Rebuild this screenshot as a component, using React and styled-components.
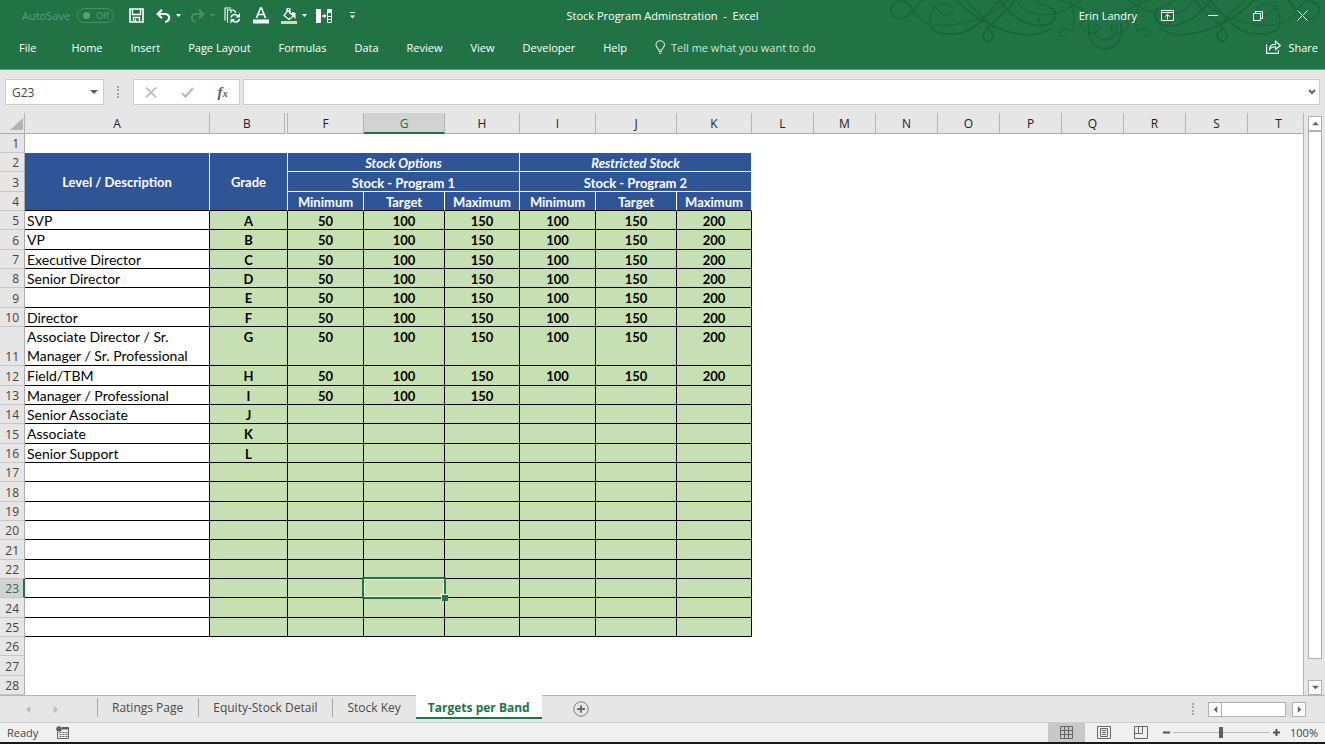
import { useState } from "react";
import styled, { createGlobalStyle } from "styled-components";

const columns = [
  { name: "A", width: 185 },
  { name: "B", width: 78 },
  { name: "F", width: 76 },
  { name: "G", width: 81 },
  { name: "H", width: 75 },
  { name: "I", width: 76 },
  { name: "J", width: 81 },
  { name: "K", width: 75 },
  { name: "L", width: 62 },
  { name: "M", width: 62 },
  { name: "N", width: 62 },
  { name: "O", width: 62 },
  { name: "P", width: 62 },
  { name: "Q", width: 62 },
  { name: "R", width: 62 },
  { name: "S", width: 62 },
  { name: "T", width: 62 },
];

const valueColumns = ["F", "G", "H", "I", "J", "K"];
const emptyColumns = ["L", "M", "N", "O", "P", "Q", "R", "S", "T", "rest"];

const program1 = [50, 100, 150];
const program2 = [100, 150, 200];

const levels = [
  { label: "SVP", grade: "A", values: [...program1, ...program2] },
  { label: "VP", grade: "B", values: [...program1, ...program2] },
  { label: "Executive Director", grade: "C", values: [...program1, ...program2] },
  { label: "Senior Director", grade: "D", values: [...program1, ...program2] },
  { label: "", grade: "E", values: [...program1, ...program2] },
  { label: "Director", grade: "F", values: [...program1, ...program2] },
  {
    label: "Associate Director / Sr. Manager / Sr. Professional",
    grade: "G",
    values: [...program1, ...program2],
  },
  { label: "Field/TBM", grade: "H", values: [...program1, ...program2] },
  { label: "Manager / Professional", grade: "I", values: program1 },
  { label: "Senior Associate", grade: "J", values: [] },
  { label: "Associate", grade: "K", values: [] },
  { label: "Senior Support", grade: "L", values: [] },
  ...Array.from({ length: 9 }, () => ({ label: "", grade: "", values: [] })),
];

const ribbonTabs = [
  "File",
  "Home",
  "Insert",
  "Page Layout",
  "Formulas",
  "Data",
  "Review",
  "View",
  "Developer",
  "Help",
];

const sheets = ["Ratings Page", "Equity-Stock Detail", "Stock Key", "Targets per Band"];

const Caret = () => (
  <svg width="5" height="3" viewBox="0 0 5 3">
    <path d="M0 0h5L2.5 3z" fill="currentColor" />
  </svg>
);

const Triangle = ({ points, size = 8 }) => (
  <svg width={size} height={size} viewBox="0 0 8 8">
    <polygon points={points} fill="currentColor" />
  </svg>
);

const Swirls = () => {
  const half = (
    <>
      <g strokeWidth="6">
        <path d="M112 0C96 14 78 52 48 56C18 58 8 24 28 10C48-2 68 4 80 24" />
        <path d="M138 78C150 112 232 112 276 74C300 50 328 24 344 0" />
        <path d="M390 0C366 40 318 66 300 92C284 118 304 130 318 120C330 108 322 92 306 88" />
        <path d="M212 0C262 50 348 104 432 104C468 104 480 94 500 82" />
        <path d="M344 0C372 44 420 78 470 78C512 76 524 34 492 22" />
        <path d="M612 70C606 120 628 146 660 146" />
      </g>
      <g strokeWidth="4">
        <path d="M80 24C96 56 128 76 172 76C252 74 322 44 372 0" />
        <path d="M136 78C130 30 152 10 184 12C212 20 206 46 180 44C164 42 158 26 140 14" />
        <path d="M240 0C276 30 300 60 326 84" />
        <path d="M396 0C408 32 446 46 486 44C526 40 560 22 590 0" />
        <path d="M484 74C462 80 454 60 468 52" />
        <path d="M450 0C462 12 480 14 498 24C522 40 512 66 484 76" />
        <path d="M555 0C566 30 574 72 562 94C550 82 526 84 524 100C526 112 542 110 540 100" />
        <path d="M520 0C560 6 610 44 660 60" />
        <path d="M600 62C580 66 590 92 614 98C640 106 654 78 632 76C616 80 628 118 660 120" />
      </g>
    </>
  );
  return (
    <SwirlSvg width="440" height="54" viewBox="0 0 1320 162" fill="none" stroke="#1b663d">
      {half}
      <g transform="translate(1320 0) scale(-1 1)">{half}</g>
    </SwirlSvg>
  );
};

const Level = ({ level, row, selected, onSelect }) => (
  <tr>
    <RowHeader scope="row" $active={selected.row === row}>
      {row}
    </RowHeader>
    <Cell $wrap={level.label.length > 30}>{level.label}</Cell>
    <Cell $tone="green">{level.grade}</Cell>
    {valueColumns.map((column, i) => (
      <Cell
        key={column}
        $tone="green"
        $selected={selected.row === row && selected.column === column}
        onClick={() => onSelect({ row, column })}
      >
        {level.values[i]}
      </Cell>
    ))}
    <Blanks />
  </tr>
);

const Blanks = () => emptyColumns.map((column) => <td key={column} />);

const EmptyRow = ({ row }) => (
  <tr>
    <RowHeader scope="row">{row}</RowHeader>
    <td colSpan={18} />
  </tr>
);

export default function App() {
  const [selected, setSelected] = useState({ row: 23, column: "G" });
  const [sheet, setSheet] = useState("Targets per Band");
  const [zoom, setZoom] = useState(100);

  return (
    <Window>
      <GlobalStyle />
      <Header>
        <Swirls />
        <TitleBar>
          <QuickAccess>
            <AutoSave>
              AutoSave
              <Toggle>
                <input type="checkbox" role="switch" aria-label="AutoSave" disabled />
                Off
              </Toggle>
            </AutoSave>
            <ToolButton aria-label="Save" $space={3}>
              <svg width="15" height="15" viewBox="0 0 15 15" fill="none" stroke="currentColor">
                <path d="M1 1h13v13H1z" strokeWidth="1.6" />
                <path d="M3.5 1v5.500h8V1M4.500 14V9.500h6V14" strokeWidth="1.4" />
                <path d="M6.500 11v3" strokeWidth="1.4" />
              </svg>
            </ToolButton>
            <ToolButton aria-label="Undo">
              <svg width="15" height="14" viewBox="0 0 15 14" fill="none" stroke="currentColor">
                <path d="M1.500 5H9c6 0 5 7.500 0 7.800" strokeWidth="2.200" />
                <path d="M6 0.800L1.700 5L6 9.200" strokeWidth="2.200" />
              </svg>
              <Caret />
            </ToolButton>
            <ToolButton aria-label="Redo" disabled>
              <svg width="15" height="14" viewBox="0 0 15 14" fill="none" stroke="currentColor">
                <path d="M13.500 5H6c-6 0-5 7.500 0 7.800" strokeWidth="2" />
                <path d="M9 0.800L13.300 5L9 9.200" strokeWidth="2" />
              </svg>
              <Caret />
            </ToolButton>
            <ToolButton aria-label="Refresh all" $space={3}>
              <svg width="17" height="17" viewBox="0 0 17 17" fill="none" stroke="currentColor">
                <path d="M1 13.500V1h6M3.500 15.500V3h6l2.500 2.500M7 3v3" strokeWidth="1.100" />
                <path d="M7 10.500c1-3.500 5-3.800 7-1.500M15.500 12c-1 3.500-5 3.800-7 1.500" strokeWidth="1.600" />
                <path d="M16 6v4.500h-4.500zM6.500 16.500V12H11z" fill="currentColor" stroke="none" />
              </svg>
            </ToolButton>
            <ToolButton aria-label="Font colour" $space={3}>
              <svg width="16" height="17" viewBox="0 0 16 17" fill="none" stroke="currentColor">
                <path d="M3.500 11L7.500 1h1l4 10M5 7.500h6" strokeWidth="1.700" />
                <path d="M0 14.500h16" strokeWidth="4" />
              </svg>
            </ToolButton>
            <ToolButton aria-label="Fill colour">
              <svg width="16" height="16" viewBox="0 0 16 16" fill="none" stroke="currentColor">
                <path d="M7 2.500L12.500 8L8 11.500L3 7.500zM6 5V1.500C6-0.500 9-0.500 9 1.500V6" strokeWidth="1.300" />
                <path d="M11 4l3.500 1v6c-2-1-1-4-3.500-5z" fill="currentColor" stroke="none" />
                <path d="M0 14.500h16" stroke="#c6e0b4" strokeWidth="3" />
              </svg>
              <Caret />
            </ToolButton>
            <ToolButton aria-label="Text to columns" $space={8}>
              <svg width="17" height="14" viewBox="0 0 17 14" fill="currentColor">
                <path d="M0 0h5v14H0zM6 6.300h2V4.500L10.500 7L8 9.500V7.700H6zM11 0h5v4h-5z" />
                <path d="M11.500 4v9.500h4V4M11.500 7.500h4M11.500 10.500h4" fill="none" stroke="currentColor" />
              </svg>
            </ToolButton>
            <ToolButton aria-label="Customize toolbar">
              <svg width="5" height="7" viewBox="0 0 5 7" fill="currentColor">
                <path d="M0 0h5v1H0zM0 3.500h5L2.500 6.500z" />
              </svg>
            </ToolButton>
          </QuickAccess>
          <Title>Stock Program Adminstration&nbsp; -&nbsp; Excel</Title>
          <WindowControls>
            <span>Erin Landry</span>
            <ToolButton aria-label="Ribbon display options">
              <svg width="13" height="11" viewBox="0 0 13 11" fill="none" stroke="currentColor">
                <path d="M.5.500h12v10H.5zM.5 2.500h12M6.500 9.500v-5M4 6.700L6.500 4.300L9 6.700" />
              </svg>
            </ToolButton>
            <ToolButton aria-label="Minimize">
              <svg width="11" height="11" viewBox="0 0 11 11" stroke="currentColor">
                <path d="M0 5.500h10" />
              </svg>
            </ToolButton>
            <ToolButton aria-label="Restore">
              <svg width="10" height="10" viewBox="0 0 10 10" fill="none" stroke="currentColor">
                <path d="M.5 2.500h7v7h-7zM2.500 2.500v-2h7v7h-2" />
              </svg>
            </ToolButton>
            <ToolButton aria-label="Close">
              <svg width="11" height="11" viewBox="0 0 11 11" stroke="currentColor">
                <path d="M.5.500l10 10M10.500.500l-10 10" />
              </svg>
            </ToolButton>
          </WindowControls>
        </TitleBar>
        <Ribbon>
          {ribbonTabs.map((tab) => (
            <RibbonTab key={tab}>{tab}</RibbonTab>
          ))}
          <TellMe>
            <svg width="11" height="14" viewBox="0 0 11 14" fill="none" stroke="currentColor" strokeWidth="1.100">
              <path d="M3.500 10C3.500 8 1 7.500 1 4.800C1 2.500 2.900 0.800 5.200 0.800S9.500 2.500 9.500 4.800C9.500 7.500 7 8 7 10zM3.700 11.500h3.200M4 13.200h2.500" />
            </svg>
            Tell me what you want to do
          </TellMe>
          <Share>
            <svg width="15" height="14" viewBox="0 0 15 14" fill="none" stroke="currentColor" strokeWidth="1.100">
              <path d="M.6 4.500v8.900h11.800V10" />
              <path d="M3.500 9.500C3.500 6 6 4.200 9.500 4.200V1.200L14.300 5.500L9.500 9.500V6.800C6.500 6.800 4.800 7.500 3.500 9.500z" />
            </svg>
            Share
          </Share>
        </Ribbon>
      </Header>

      <FormulaBar>
        <NameBox>
          <input
            aria-label="Name box"
            value={selected.column + selected.row}
            readOnly
          />
          <button aria-label="Open name list">
            <Triangle points="0,2 8,2 4,6" />
          </button>
        </NameBox>
        <Dots />
        <FormulaActions>
          <button aria-label="Cancel">
            <svg width="12" height="11" viewBox="0 0 12 11" stroke="#bdbdbd" strokeWidth="1.800">
              <path d="M1 .5l10 10M11 .5L1 10.500" />
            </svg>
          </button>
          <button aria-label="Enter">
            <svg width="13" height="11" viewBox="0 0 13 11" fill="none" stroke="#bdbdbd" strokeWidth="2.400">
              <path d="M1 6l3.500 3.500L12 1" />
            </svg>
          </button>
          <FxButton aria-label="Insert function">
            f<small>x</small>
          </FxButton>
        </FormulaActions>
        <FormulaInput>
          <input aria-label="Formula" />
          <button aria-label="Expand formula bar">
            <svg width="8" height="6" viewBox="0 0 8 6" fill="none" stroke="#5f5f5f" strokeWidth="2">
              <path d="M1 1l3 3l3-3" />
            </svg>
          </button>
        </FormulaInput>
      </FormulaBar>

      <Workspace>
        <SheetArea>
          <Sheet>
            <colgroup>
              <Col $width={25} />
              {columns.map((column) => (
                <Col key={column.name} $width={column.width} />
              ))}
              <col />
            </colgroup>
            <thead>
              <tr>
                <Corner>
                  <svg width="14" height="12" viewBox="0 0 14 12">
                    <path d="M14 0v12H1z" fill="#b4b4b4" />
                  </svg>
                </Corner>
                {columns.map((column) => (
                  <ColumnHeader
                    key={column.name}
                    scope="col"
                    $active={column.name === selected.column}
                    $hiddenAfter={column.name === "B"}
                  >
                    {column.name}
                  </ColumnHeader>
                ))}
                <ColumnHeader />
              </tr>
            </thead>
            <tbody>
              <EmptyRow row={1} />
              <tr>
                <RowHeader scope="row">2</RowHeader>
                <Cell $tone="blue" $last rowSpan={3}>
                  Level / Description
                </Cell>
                <Cell $tone="blue" $last rowSpan={3}>
                  Grade
                </Cell>
                <Cell $tone="blue" colSpan={3}>
                  <em>Stock Options</em>
                </Cell>
                <Cell $tone="blue" colSpan={3}>
                  <em>Restricted Stock</em>
                </Cell>
                <Blanks />
              </tr>
              <tr>
                <RowHeader scope="row">3</RowHeader>
                <Cell $tone="blue" colSpan={3}>
                  Stock - Program 1
                </Cell>
                <Cell $tone="blue" colSpan={3}>
                  Stock - Program 2
                </Cell>
                <Blanks />
              </tr>
              <tr>
                <RowHeader scope="row">4</RowHeader>
                {["Minimum", "Target", "Maximum", "Minimum", "Target", "Maximum"].map(
                  (title, i) => (
                    <Cell key={i} $tone="blue" $last>
                      {title}
                    </Cell>
                  )
                )}
                <Blanks />
              </tr>
              {levels.map((level, i) => (
                <Level
                  key={i}
                  level={level}
                  row={i + 5}
                  selected={selected}
                  onSelect={setSelected}
                />
              ))}
              <EmptyRow row={26} />
              <EmptyRow row={27} />
              <EmptyRow row={28} />
            </tbody>
          </Sheet>
        </SheetArea>
        <VerticalScroll>
          <ScrollButton aria-label="Scroll up">
            <Triangle points="0,6 8,6 4,2" size={7} />
          </ScrollButton>
          <VerticalThumb />
          <ScrollButton aria-label="Scroll down">
            <Triangle points="0,2 8,2 4,6" size={7} />
          </ScrollButton>
        </VerticalScroll>
      </Workspace>

      <SheetBar>
        <SheetArrows>
          <button aria-label="Previous sheet">
            <Triangle points="6,0 6,8 1,4" size={7} />
          </button>
          <button aria-label="Next sheet">
            <Triangle points="2,0 2,8 7,4" size={7} />
          </button>
        </SheetArrows>
        {sheets.map((name) => (
          <SheetTab key={name} $active={name === sheet} onClick={() => setSheet(name)}>
            {name}
          </SheetTab>
        ))}
        <AddSheet aria-label="New sheet">
          <svg width="16" height="16" viewBox="0 0 16 16" fill="none" stroke="#7d7d7d">
            <circle cx="8" cy="8" r="7.200" />
            <path d="M8 4.200v7.600M4.200 8h7.600" strokeWidth="1.800" stroke="#6a6a6a" />
          </svg>
        </AddSheet>
        <HorizontalScroll>
          <Dots />
          <HorizontalTrack>
            <ScrollButton aria-label="Scroll left">
              <Triangle points="6,0 6,8 2,4" size={7} />
            </ScrollButton>
            <HorizontalThumb />
            <ScrollButton aria-label="Scroll right">
              <Triangle points="2,0 2,8 6,4" size={7} />
            </ScrollButton>
          </HorizontalTrack>
        </HorizontalScroll>
      </SheetBar>

      <StatusBar>
        <span>Ready</span>
        <MacroButton aria-label="Record macro">
          <svg width="13" height="13" viewBox="0 0 13 13" fill="none" stroke="#5f5f5f">
            <path d="M1.500 6v6.500h11v-11H6" />
            <path d="M6 2.500h6.500" strokeWidth="2" />
            <path d="M3.500 6.500h2M6.500 6.500h2M9.500 6.500h2M3.500 8.500h2M6.500 8.500h2M9.500 8.500h2M3.500 10.500h2M6.500 10.500h2M9.500 10.500h2" />
            <circle cx="3" cy="3" r="2.800" fill="#5f5f5f" stroke="none" />
          </svg>
        </MacroButton>
        <ViewButtons>
          <ViewButton aria-label="Normal view" $active>
            <svg width="13" height="13" viewBox="0 0 13 13" fill="none" stroke="#666">
              <path d="M.5.500h12v12H.5zM.5 4.500h12M.5 8.500h12M4.500.500v12M8.500.500v12" />
            </svg>
          </ViewButton>
          <ViewButton aria-label="Page layout view">
            <svg width="14" height="13" viewBox="0 0 14 13" fill="none" stroke="#666">
              <path d="M.5.500h13v12H.5zM3.500 2.500h7v8h-7zM5 4.500h4M5 6.500h4M5 8.500h4" />
            </svg>
          </ViewButton>
          <ViewButton aria-label="Page break preview">
            <svg width="14" height="13" viewBox="0 0 14 13" fill="none" stroke="#666">
              <path d="M.5.500h13v12H.5zM.5 7.500h8M4.500.500v7M8.500.500v7" />
            </svg>
          </ViewButton>
        </ViewButtons>
        <ZoomButton aria-label="Zoom out" onClick={() => setZoom(zoom - 10)}>
          <svg width="7" height="7" viewBox="0 0 7 7" stroke="#555" strokeWidth="2">
            <path d="M0 3.500h7" />
          </svg>
        </ZoomButton>
        <ZoomSlider
          type="range"
          aria-label="Zoom"
          min="10"
          max="190"
          value={zoom}
          onChange={(e) => setZoom(Number(e.target.value))}
        />
        <ZoomButton aria-label="Zoom in" onClick={() => setZoom(zoom + 10)}>
          <svg width="7" height="7" viewBox="0 0 7 7" stroke="#555" strokeWidth="2">
            <path d="M0 3.500h7M3.500 0v7" />
          </svg>
        </ZoomButton>
        <ZoomValue>{zoom}%</ZoomValue>
      </StatusBar>
      <TaskbarEdge />
    </Window>
  );
}

const GlobalStyle = createGlobalStyle`
  * {
    box-sizing: border-box;
  }

  body {
    margin: 0;
    background-color: #e6e6e6;
  }

  body,
  button,
  input {
    font-family: "Open Sans", "Noto Sans", sans-serif;
    font-size: 12px;
  }

  button {
    padding: 0;
    border: none;
    background: none;
    color: inherit;
    cursor: pointer;
  }

  svg {
    display: block;
  }
`;

const Window = styled.div`
  display: flex;
  flex-direction: column;
  height: 100vh;
  overflow: hidden;
`;

const Header = styled.header`
  position: relative;
  padding-bottom: 8px;
  border-bottom: 1px solid #5f9c7a;
  background-color: #217346;
  color: #ffffff;
`;

const SwirlSvg = styled.svg`
  position: absolute;
  top: 0;
  right: 0;
`;

const TitleBar = styled.div`
  position: relative;
  display: grid;
  grid-template-columns: 1fr auto 1fr;
  align-items: center;
  height: 31px;
`;

const QuickAccess = styled.div`
  display: flex;
  align-items: center;
  gap: 9px;
  padding-left: 22px;
`;

const AutoSave = styled.div`
  display: flex;
  align-items: center;
  gap: 7px;
  margin-right: 6px;
  color: #5f9c79;
  font-size: 11px;
`;

const Toggle = styled.label`
  display: flex;
  align-items: center;
  gap: 6px;
  width: 37px;
  height: 15px;
  padding-left: 5px;
  border: 1px solid #4d8d69;
  border-radius: 8px;
  font-size: 9px;

  input {
    appearance: none;
    width: 7px;
    height: 7px;
    margin: 0;
    border-radius: 50%;
    background-color: #5f9c79;
  }
`;

const ToolButton = styled.button`
  display: flex;
  align-items: center;
  gap: 5px;
  margin-right: ${({ $space = 0 }) => $space}px;

  &:disabled {
    color: #4d8d69;
    cursor: default;
  }
`;

const Title = styled.h1`
  margin: 0;
  font-size: 11px;
  font-weight: 400;
`;

const WindowControls = styled.div`
  display: flex;
  align-items: center;
  justify-content: flex-end;
  gap: 34px;
  padding-right: 17px;
  font-size: 11px;

  span {
    margin-right: -10px;
  }
`;

const Ribbon = styled.nav`
  position: relative;
  display: flex;
  align-items: center;
  gap: 28px;
  height: 28px;
  padding: 0 7px 0 19px;
  margin-top: 2px;
`;

const RibbonTab = styled.button`
  font-size: 11px;

  &:first-child {
    margin-right: 7px;
  }
`;

const TellMe = styled.button`
  display: flex;
  align-items: center;
  gap: 5px;
  color: #d3e3da;
  font-size: 11px;
`;

const Share = styled.button`
  display: flex;
  align-items: center;
  gap: 7px;
  margin-left: auto;
  font-size: 11px;
`;

const FormulaBar = styled.div`
  display: flex;
  align-items: center;
  padding: 9px 5px 8px;

  input {
    flex: 1;
    min-width: 0;
    height: 100%;
    padding: 0 6px;
    border: none;
    outline: none;
    background: none;
    color: #444444;
  }
`;

const Field = styled.div`
  display: flex;
  align-items: center;
  height: 26px;
  border: 1px solid #cdcdcd;
  background-color: #ffffff;
  color: #5f5f5f;
`;

const NameBox = styled(Field)`
  width: 99px;
  padding-right: 5px;
`;

const Dots = styled.div`
  width: 2px;
  height: 12px;
  margin: 0 14px 0 13px;
  border-left: 2px dotted #a8a8a8;
`;

const FormulaActions = styled(Field)`
  justify-content: space-between;
  width: 107px;
  margin-right: 3px;
  padding: 0 11px;
`;

const FxButton = styled.button`
  font-family: "Liberation Serif", serif;
  font-size: 15px;
  font-style: italic;
  font-weight: 700;

  small {
    font-size: 11px;
  }
`;

const FormulaInput = styled(Field)`
  flex: 1;
  padding-right: 3px;
`;

const Workspace = styled.main`
  display: flex;
  flex: 1;
  min-height: 0;
`;

const SheetArea = styled.div`
  flex: 1;
  min-width: 0;
  overflow: hidden;
  border-right: 1px solid #b5b5b5;
  background-color: #ffffff;
`;

const Sheet = styled.table`
  width: 100%;
  table-layout: fixed;
  border-collapse: separate;
  border-spacing: 0;
  font-family: Lato, sans-serif;

  th,
  td {
    padding: 2px 0 0;
    line-height: 16px;
  }

  tbody tr {
    height: 19px;
  }

  tbody tr:nth-child(3n) {
    height: 20px;
  }
`;

const Col = styled.col`
  width: ${({ $width }) => $width}px;
`;

const Corner = styled.td`
  height: 21px;
  border-right: 1px solid #b5b5b5;
  border-bottom: 1px solid #ababab;
  background-color: #e6e6e6;

  svg {
    margin-left: 9px;
  }
`;

const ColumnHeader = styled.th`
  height: 21px;
  border-right: ${({ $hiddenAfter }) => ($hiddenAfter ? "4px double" : "1px solid")} #b5b5b5;
  border-bottom: ${({ $active }) => ($active ? "2px solid #217346" : "1px solid #ababab")};
  background-color: ${({ $active }) => ($active ? "#d2d2d2" : "#e6e6e6")};
  color: ${({ $active }) => ($active ? "#217346" : "#222222")};
  font-family: "Open Sans", sans-serif;
  font-size: 12px;
  font-weight: 400;
`;

const RowHeader = styled.th`
  border-right: ${({ $active }) => ($active ? "2px solid #217346" : "1px solid #ababab")};
  border-bottom: 1px solid #c6c6c6;
  background-color: ${({ $active }) => ($active ? "#d2d2d2" : "#e6e6e6")};
  color: ${({ $active }) => ($active ? "#217346" : "#444444")};
  font-family: "Open Sans", sans-serif;
  font-size: 12px;
  font-weight: 400;
  text-align: right;
  vertical-align: bottom;

  && {
    padding-right: ${({ $active }) => ($active ? "4px" : "5px")};
  }
`;

const tones = {
  white: { background: "#ffffff", border: "#000000", size: 14 },
  green: { background: "#c6e0b4", border: "#000000", size: 13 },
  blue: { background: "#2f5597", border: "#ffffff", size: 13 },
};

const Cell = styled.td`
  position: relative;
  border-right: 1px solid ${({ $tone = "white" }) => tones[$tone].border};
  border-bottom: 1px solid
    ${({ $tone = "white", $last }) => ($last ? "#000000" : tones[$tone].border)};
  background-color: ${({ $tone = "white" }) => tones[$tone].background};
  color: ${({ $tone }) => ($tone === "blue" ? "#ffffff" : "#000000")};
  font-size: ${({ $tone = "white" }) => tones[$tone].size}px;
  font-weight: ${({ $tone }) => ($tone ? 700 : 400)};
  text-align: ${({ $tone }) => ($tone ? "center" : "left")};
  vertical-align: ${({ $tone }) => ($tone === "blue" ? "middle" : "top")};

  && {
    padding-left: ${({ $tone }) => ($tone ? "0" : "2px")};
    padding-top: ${({ $wrap, rowSpan }) => ($wrap || rowSpan ? "0" : "2px")};
    line-height: ${({ $wrap }) => ($wrap ? "19px" : "16px")};
  }

  ${({ $selected }) =>
    $selected &&
    `
    z-index: 1;

    &::before {
      content: "";
      position: absolute;
      inset: -2px;
      border: 2px solid #217346;
      box-shadow: inset 0 0 0 1px #e8f3e0;
    }

    &::after {
      content: "";
      position: absolute;
      right: -4px;
      bottom: -4px;
      width: 6px;
      height: 6px;
      border-top: 1px solid #ffffff;
      border-left: 1px solid #ffffff;
      background-color: #217346;
    }
  `}
`;

const VerticalScroll = styled.div`
  display: flex;
  flex-direction: column;
  padding: 3px 3px 0 4px;
`;

const ScrollButton = styled.button`
  display: flex;
  align-items: center;
  justify-content: center;
  width: 14px;
  height: 15px;
  border: 1px solid #b0b0b0;
  background-color: #ffffff;
  color: #666666;
`;

const VerticalThumb = styled.div`
  flex: 1;
  margin-bottom: 21px;
  border: 1px solid #b0b0b0;
  background-color: #ffffff;
`;

const SheetBar = styled.div`
  display: flex;
  align-items: stretch;
  height: 28px;
  border-top: 1px solid #b5b5b5;
  border-bottom: 1px solid #cfcfcf;
`;

const SheetArrows = styled.div`
  display: flex;
  align-items: center;
  gap: 20px;
  width: 97px;
  padding-left: 25px;
  color: #bcbcbc;
`;

const SheetTab = styled.button`
  margin: ${({ $active }) => ($active ? "-1px 0 3px" : "2px 0 5px")};
  padding: ${({ $active }) => ($active ? "2px 12px 0" : "0 15px 0 14px")};
  border-bottom: ${({ $active }) => ($active ? "2px solid #217346" : "none")};
  border-left: ${({ $active }) => ($active ? "none" : "1px solid #a8a8a8")};
  background-color: ${({ $active }) => ($active ? "#ffffff" : "transparent")};
  color: ${({ $active }) => ($active ? "#217346" : "#4a4a4a")};
  font-weight: ${({ $active }) => ($active ? 700 : 400)};
`;

const AddSheet = styled.button`
  margin-left: 31px;
`;

const HorizontalScroll = styled.div`
  display: flex;
  align-items: center;
  margin-left: auto;
  padding-right: 19px;
`;

const HorizontalTrack = styled.div`
  display: flex;
  background-color: #dcdcdc;
`;

const HorizontalThumb = styled.div`
  width: 64px;
  margin-right: 6px;
  border: 1px solid #b0b0b0;
  border-left: none;
  background-color: #ffffff;
`;

const StatusBar = styled.footer`
  display: flex;
  align-items: center;
  height: 19px;
  padding: 0 7px;
  background-color: #f0f0f0;
  color: #444444;
  font-size: 11px;
`;

const MacroButton = styled.button`
  margin-left: 18px;
`;

const ViewButtons = styled.div`
  display: flex;
  align-self: stretch;
  margin-left: auto;
`;

const ViewButton = styled.button`
  display: flex;
  align-items: center;
  justify-content: center;
  width: 37px;
  background-color: ${({ $active }) => ($active ? "#c8c8c8" : "transparent")};
`;

const ZoomButton = styled.button`
  margin: 0 3px 0 4px;
`;

const ZoomSlider = styled.input`
  appearance: none;
  width: 96px;
  height: 12px;
  margin: 0;
  background: linear-gradient(#b8b8b8, #b8b8b8) center / 100% 1px no-repeat;

  &::-webkit-slider-thumb {
    appearance: none;
    width: 4px;
    height: 11px;
    background-color: #5f5f5f;
  }
`;

const ZoomValue = styled.span`
  width: 35px;
  text-align: right;
`;

const TaskbarEdge = styled.div`
  height: 2px;
  background-color: #1a1a1a;
`;
